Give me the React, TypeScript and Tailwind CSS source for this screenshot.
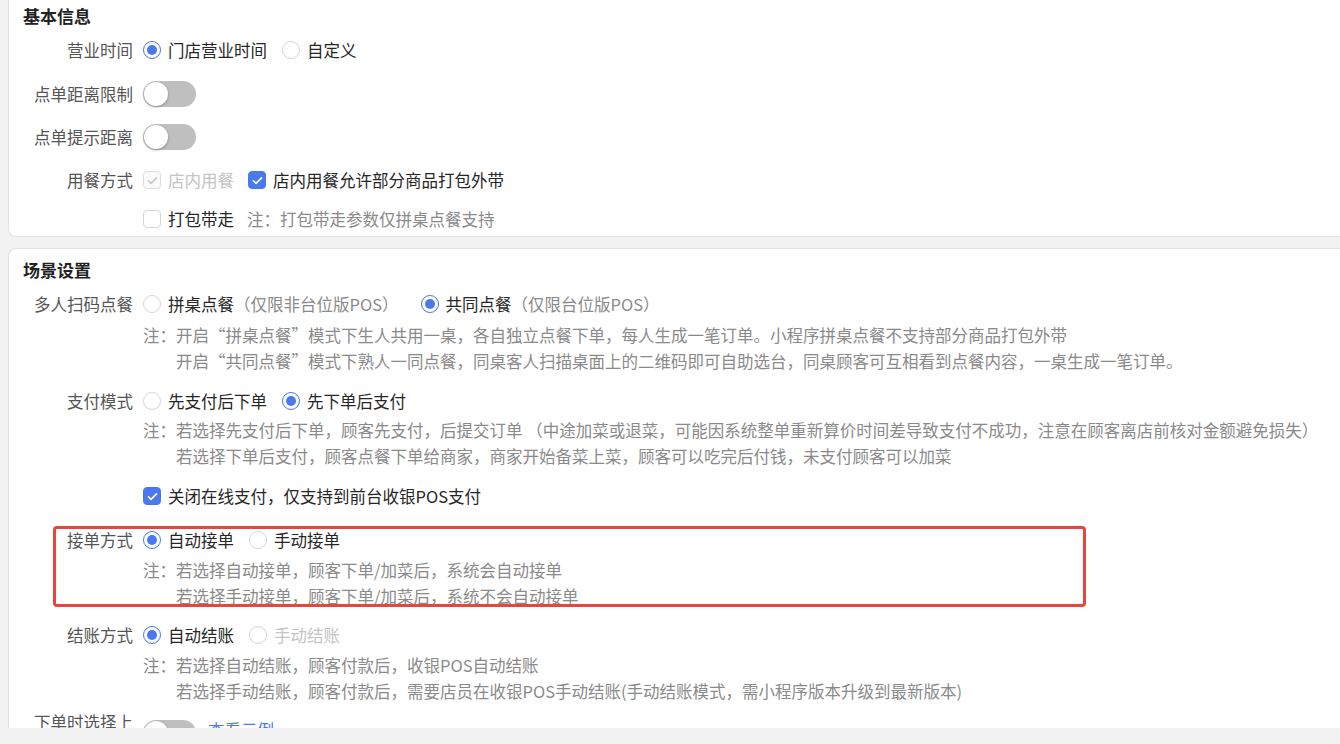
import * as React from 'react';

const FONT = { fontFamily: '"Noto Sans CJK SC", "Noto Sans", sans-serif' };

const Radio: React.FC<{ checked?: boolean; disabled?: boolean; children: React.ReactNode }> = ({ checked, disabled, children }) => (
  <label className="flex items-center mr-[15px]">
    <span
      className={
        'w-[18px] h-[18px] rounded-full border flex items-center justify-center shrink-0 bg-white ' +
        (checked ? 'border-[#4a78ee]' : 'border-[#d6d6d6]')
      }
    >
      {checked && <span className="w-[10px] h-[10px] rounded-full bg-[#4a78ee]" />}
    </span>
    <span className={'ml-[7px] ' + (disabled ? 'text-[#c4c4c4]' : 'text-[#262626]')}>{children}</span>
  </label>
);

const CheckIcon: React.FC<{ color: string }> = ({ color }) => (
  <svg viewBox="0 0 16 16" className="w-[13px] h-[13px]" fill="none">
    <path d="M3 8.3l3.2 3.2L13 4.8" stroke={color} strokeWidth={2} strokeLinecap="round" strokeLinejoin="round" />
  </svg>
);

const Checkbox: React.FC<{ checked?: boolean; disabled?: boolean; children: React.ReactNode }> = ({ checked, disabled, children }) => {
  let box = 'border-[#d6d6d6] bg-white';
  if (checked && !disabled) box = 'border-[#4a78ee] bg-[#4a78ee]';
  if (disabled) box = 'border-[#dcdcdc] bg-[#fafafa]';
  return (
    <label className="flex items-center mr-[14px]">
      <span className={'w-[18px] h-[18px] rounded-[4px] border flex items-center justify-center shrink-0 ' + box}>
        {checked && <CheckIcon color={disabled ? '#c8c8c8' : '#ffffff'} />}
      </span>
      <span className={'ml-[7px] ' + (disabled ? 'text-[#c4c4c4]' : 'text-[#262626]')}>{children}</span>
    </label>
  );
};

const Switch: React.FC = () => (
  <span className="w-[53px] h-[26px] rounded-full bg-[#bfbfbf] flex items-center px-px shrink-0">
    <span className="w-[24px] h-[24px] rounded-full bg-white shadow-[0_1px_3px_rgba(0,0,0,0.3)]" />
  </span>
);

const Row: React.FC<{ label?: string; className?: string; children: React.ReactNode }> = ({ label, className, children }) => (
  <div className={'flex items-center h-[28px] ' + (className || '')}>
    <div className="w-[110px] shrink-0 text-right text-[#555555] whitespace-nowrap">{label}</div>
    <div className="ml-[10px] flex items-center">{children}</div>
  </div>
);

const Note: React.FC<{ lines: string[]; className?: string }> = ({ lines, className }) => (
  <div className={'pl-[120px] text-[#8a8a8a] leading-[26px] ' + (className || '')}>
    {lines.map((l, i) => (
      <div key={i} className="whitespace-nowrap">
        {i === 0 ? <span>注：{l}</span> : <span className="pl-[33px]">{l}</span>}
      </div>
    ))}
  </div>
);

const App: React.FC = () => {
  return (
    <div className="h-[744px] w-[1340px] bg-[#f2f2f2] overflow-hidden text-[16.5px]" style={FONT}>
      <div className="h-[728px] overflow-hidden">
        {/* 基本信息 */}
        <div className="ml-2 bg-white border border-t-0 border-r-0 border-[#e2e2e2] rounded-bl-lg pl-[14px] pt-[4px] pb-[3px]">
          <div className="h-[24px] leading-[24px] text-[17px] font-bold text-[#222222]">基本信息</div>
          <Row label="营业时间" className="mt-[8px]">
            <Radio checked>门店营业时间</Radio>
            <Radio>自定义</Radio>
          </Row>
          <Row label="点单距离限制" className="mt-[16px]">
            <Switch />
          </Row>
          <Row label="点单提示距离" className="mt-[15px]">
            <Switch />
          </Row>
          <Row label="用餐方式" className="mt-[15px]">
            <Checkbox checked disabled>店内用餐</Checkbox>
            <Checkbox checked>店内用餐允许部分商品打包外带</Checkbox>
          </Row>
          <Row className="mt-[11px]">
            <Checkbox>打包带走</Checkbox>
            <span className="text-[#8a8a8a] -ml-[1px]">注：打包带走参数仅拼桌点餐支持</span>
          </Row>
        </div>

        {/* 场景设置 */}
        <div className="ml-2 mt-[11px] bg-white border border-r-0 border-b-0 border-[#e2e2e2] rounded-tl-lg pl-[14px] pt-[9px]">
          <div className="h-[24px] leading-[24px] text-[17px] font-bold text-[#222222]">场景设置</div>
          <Row label="多人扫码点餐" className="mt-[8px]">
            <Radio>
              拼桌点餐<span className="text-[#8a8a8a]">（仅限非台位版POS）</span>
            </Radio>
            <span className="w-[7px]" />
            <Radio checked>
              共同点餐<span className="text-[#8a8a8a]">（仅限台位版POS）</span>
            </Radio>
          </Row>
          <Note
            className="mt-[4px]"
            lines={[
              '开启“拼桌点餐”模式下生人共用一桌，各自独立点餐下单，每人生成一笔订单。小程序拼桌点餐不支持部分商品打包外带',
              '开启“共同点餐”模式下熟人一同点餐，同桌客人扫描桌面上的二维码即可自助选台，同桌顾客可互相看到点餐内容，一桌生成一笔订单。',
            ]}
          />
          <Row label="支付模式" className="mt-[13px]">
            <Radio>先支付后下单</Radio>
            <Radio checked>先下单后支付</Radio>
          </Row>
          <Note
            className="mt-[2px]"
            lines={[
              '若选择先支付后下单，顾客先支付，后提交订单 （中途加菜或退菜，可能因系统整单重新算价时间差导致支付不成功，注意在顾客离店前核对金额避免损失）',
              '若选择下单后支付，顾客点餐下单给商家，商家开始备菜上菜，顾客可以吃完后付钱，未支付顾客可以加菜',
            ]}
          />
          <Row className="mt-[13px]">
            <Checkbox checked>关闭在线支付，仅支持到前台收银POS支付</Checkbox>
          </Row>

          <div className="relative mt-[16px]">
            <Row label="接单方式">
              <Radio checked>自动接单</Radio>
              <Radio>手动接单</Radio>
            </Row>
            <Note
              className="mt-[3px]"
              lines={['若选择自动接单，顾客下单/加菜后，系统会自动接单', '若选择手动接单，顾客下单/加菜后，系统不会自动接单']}
            />
            <div className="pointer-events-none absolute left-[30px] top-0 w-[1033px] h-[81px] border-[3px] border-[#e8463d] rounded-[4px]" />
          </div>

          <Row label="结账方式" className="mt-[12px]">
            <Radio checked>自动结账</Radio>
            <Radio disabled>手动结账</Radio>
          </Row>
          <Note
            className="mt-[3px]"
            lines={[
              '若选择自动结账，顾客付款后，收银POS自动结账',
              '若选择手动结账，顾客付款后，需要店员在收银POS手动结账(手动结账模式，需小程序版本升级到最新版本)',
            ]}
          />
          <div className="flex mt-[4px]">
            <div className="w-[110px] shrink-0 text-right text-[#555555] leading-[28px] break-all">下单时选择上菜方式</div>
            <div className="ml-[10px] flex items-start pt-[12px]">
              <Switch />
              <span className="ml-[12px] text-[#4a78ee] leading-[28px] -mt-[4px]">查看示例</span>
            </div>
          </div>
        </div>
      </div>
    </div>
  );
};

export default App;
